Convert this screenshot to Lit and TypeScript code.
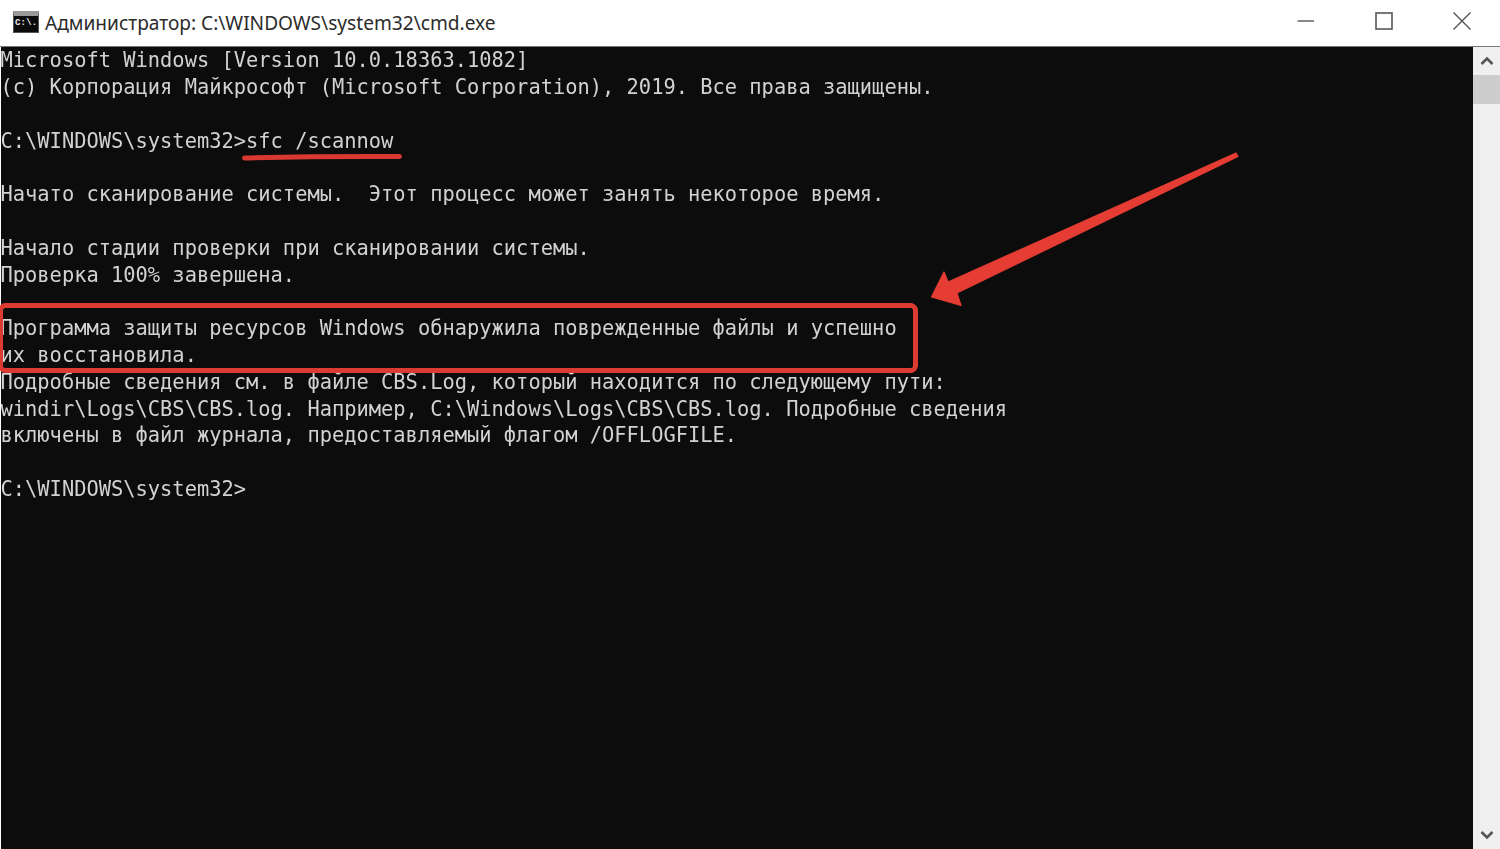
import { LitElement, html, css } from "lit";
import { customElement } from "lit/decorators.js";

const LINES = [
  "Microsoft Windows [Version 10.0.18363.1082]",
  "(c) Корпорация Майкрософт (Microsoft Corporation), 2019. Все права защищены.",
  "",
  "C:\\WINDOWS\\system32>sfc /scannow",
  "",
  "Начато сканирование системы.  Этот процесс может занять некоторое время.",
  "",
  "Начало стадии проверки при сканировании системы.",
  "Проверка 100% завершена.",
  "",
  "Программа защиты ресурсов Windows обнаружила поврежденные файлы и успешно",
  "их восстановила.",
  "Подробные сведения см. в файле CBS.Log, который находится по следующему пути:",
  "windir\\Logs\\CBS\\CBS.log. Например, C:\\Windows\\Logs\\CBS\\CBS.log. Подробные сведения",
  "включены в файл журнала, предоставляемый флагом /OFFLOGFILE.",
  "",
  "C:\\WINDOWS\\system32>",
];

@customElement("app-root")
export class AppRoot extends LitElement {
  static styles = css`
    :host { display: block; width: 1500px; height: 849px; overflow: hidden; position: relative; background: #fff; }
    .window { display: flex; flex-direction: column; height: 849px; }
    .titlebar { flex: none; height: 46px; background: #fff; border-bottom: 1px solid #77797b; display: flex; align-items: center; padding-left: 13px; box-sizing: content-box; }
    .icon { flex: none; width: 26px; height: 22px; box-sizing: border-box; background: #0c0c0c; border: 1px solid #555; border-top: 5px solid #9a9a9a; color: #eee; font: bold 9px/15px "Liberation Mono", monospace; letter-spacing: 0.2px; padding-left: 1px; margin-top: -2px; white-space: pre; }
    .title { margin-left: 6px; font: 19.13px "Noto Sans", sans-serif; color: #2b2b2b; margin-top: -1px; white-space: pre; }
    .controls { margin-left: auto; display: flex; align-items: center; margin-top: -5px; padding-right: 29px; }
    .controls svg { display: block; width: 18px; height: 18px; }
    .controls svg + svg { margin-left: 60px; }
    .body { flex: 1; display: flex; min-height: 0; padding-left: 1px; }
    .console { flex: 1; background: #0c0c0c; color: #d2d2d2; font: 20.4px/26.8px "DejaVu Sans Mono", monospace; filter: blur(0.4px); overflow: hidden; padding-top: 0.3px; }
    .line { height: 26.8px; white-space: pre; margin-left: -0.5px; }
    .scrollbar { flex: none; width: 27px; background: #f0f0f0; display: flex; flex-direction: column; }
    .arrow { flex: none; height: 28px; display: flex; align-items: center; justify-content: center; }
    .arrow svg { width: 14px; height: 10px; display: block; }
    .thumb { flex: none; height: 29px; background: #cdcdcd; }
    .spacer { flex: 1; }
    .marks { position: absolute; left: 0; top: 0; pointer-events: none; }
  `;

  render() {
    return html`
      <div class="window">
        <div class="titlebar">
          <div class="icon">C:\\.</div>
          <div class="title">Администратор: C:\\WINDOWS\\system32\\cmd.exe</div>
          <div class="controls">
            <svg viewBox="0 0 18 18"><path d="M0.5 9H17" stroke="#555" stroke-width="1.4" fill="none"/></svg>
            <svg viewBox="0 0 18 18"><rect x="1" y="1" width="16" height="16" stroke="#555" stroke-width="1.6" fill="none"/></svg>
            <svg viewBox="0 0 18 18"><path d="M0.5 0.5L17.5 17.5M17.5 0.5L0.5 17.5" stroke="#555" stroke-width="1.4" fill="none"/></svg>
          </div>
        </div>
        <div class="body">
          <div class="console">${LINES.map((l) => html`<div class="line">${l}</div>`)}</div>
          <div class="scrollbar">
            <div class="arrow"><svg viewBox="0 0 14 10"><path d="M1.5 8L7 2.5L12.5 8" stroke="#555" stroke-width="2.6" fill="none"/></svg></div>
            <div class="thumb"></div>
            <div class="spacer"></div>
            <div class="arrow"><svg viewBox="0 0 14 10"><path d="M1.5 2L7 7.5L12.5 2" stroke="#555" stroke-width="2.6" fill="none"/></svg></div>
          </div>
        </div>
      </div>
      <svg class="marks" width="1500" height="849" viewBox="0 0 1500 849">
        <path d="M244.5 158Q320 156 399.5 156.5" stroke="#d8382f" stroke-width="5" stroke-linecap="round" fill="none"/>
        <rect x="0.5" y="305.5" width="915" height="65" rx="5" stroke="#dd3b31" stroke-width="5" fill="none"/>
        <path d="M931.5 297L944 272L948 282L1236 153L1238 156.5L957 293L961 305.5Z" fill="#e53d33" stroke="#e53d33" stroke-width="1.2" stroke-linejoin="round"/>
      </svg>
    `;
  }
}
